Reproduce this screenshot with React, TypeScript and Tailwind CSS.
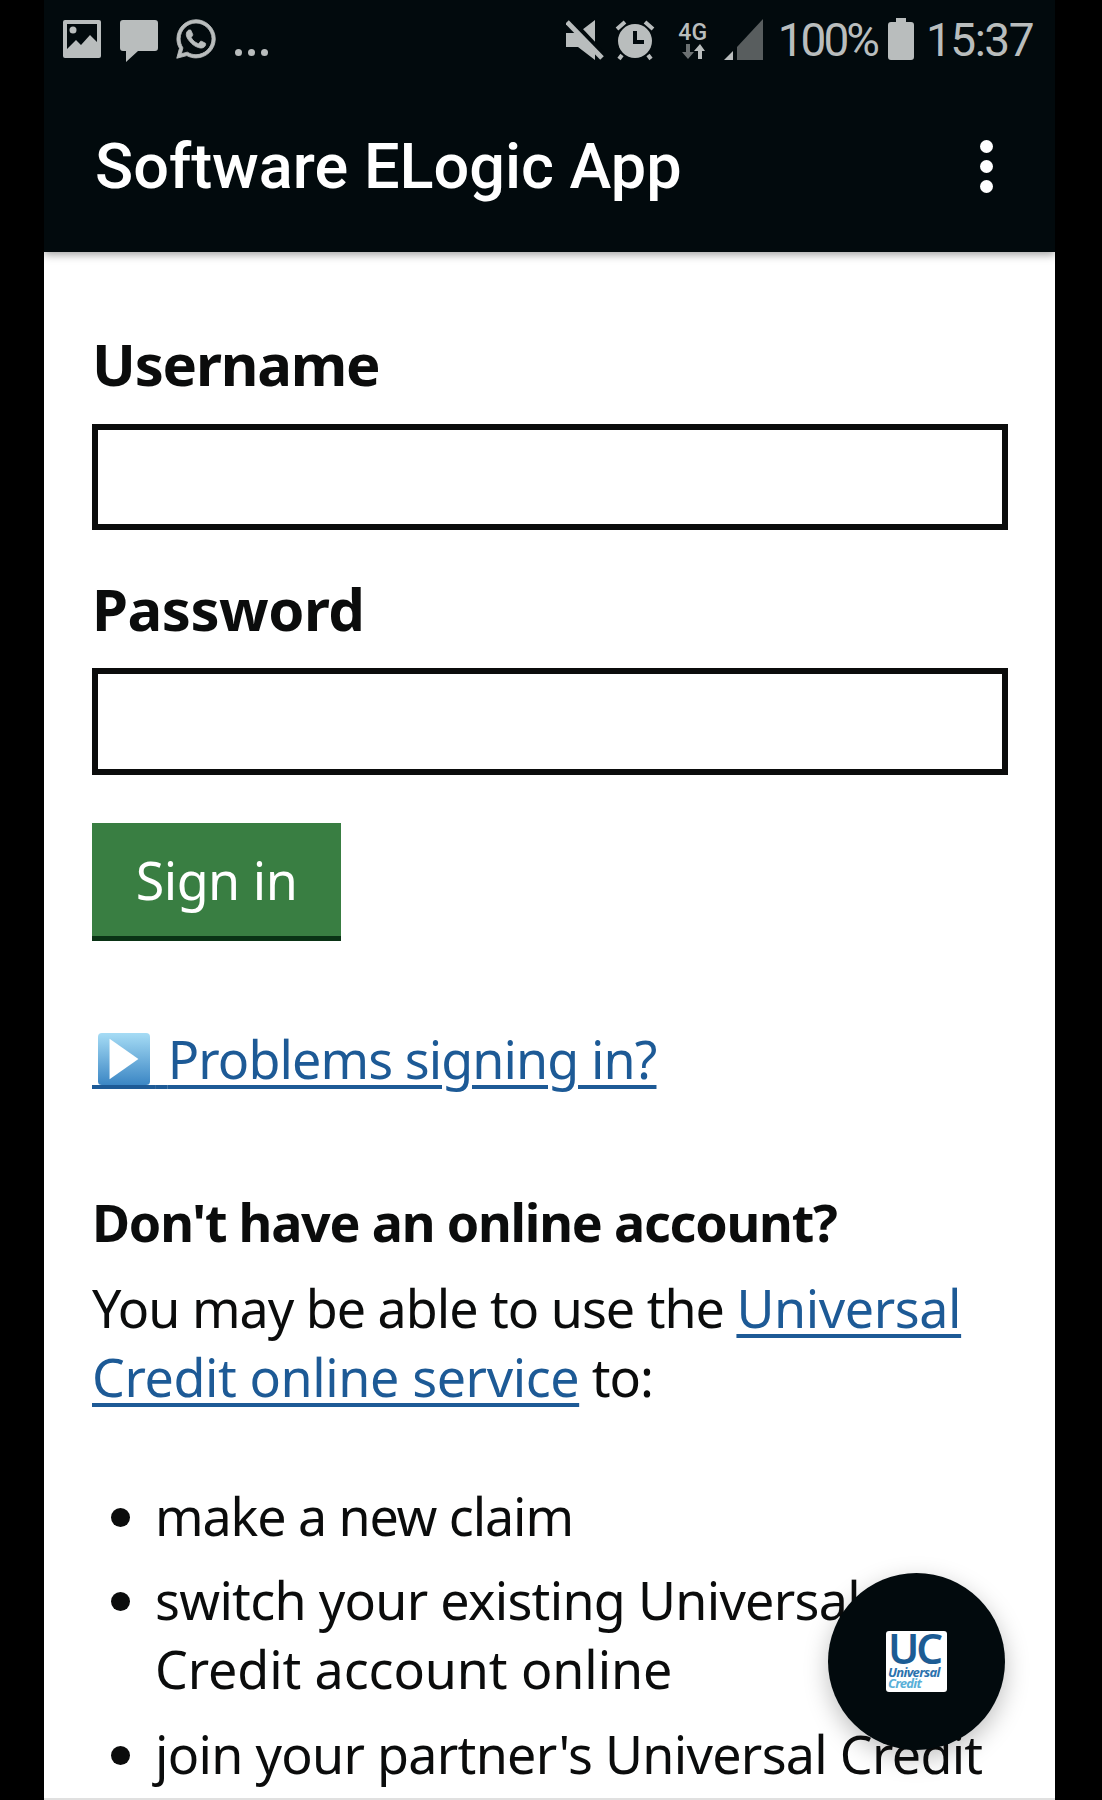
import { FaWhatsapp } from 'react-icons/fa';

function StatusIcons() {
  return (
    <div className="flex items-center h-[80px] pl-[19px] pr-[22px] text-[#b9bdbd]">
      <svg className="w-[38px] h-[38px] mt-[-2px]" viewBox="0 0 38 38">
        <path fill="#b9bdbd" d="M2 0h34a2 2 0 0 1 2 2v34a2 2 0 0 1-2 2H2a2 2 0 0 1-2-2V2a2 2 0 0 1 2-2z" />
        <path fill="#020a0d" d="M4 4h30v18l-7-7-9 10-5-5-9 9z" />
        <circle cx="10" cy="10" r="3.5" fill="#b9bdbd" />
      </svg>
      <svg className="w-[38px] h-[44px] ml-[19px] mt-[4px]" viewBox="0 0 38 44">
        <path fill="#b9bdbd" d="M3 0h32a3 3 0 0 1 3 3v25a3 3 0 0 1-3 3H18L6 42v-11H3a3 3 0 0 1-3-3V3a3 3 0 0 1 3-3z" />
      </svg>
      <FaWhatsapp className="w-[44px] h-[44px] ml-[16px] mt-[-3px] stroke-current stroke-[10]" />
      <div className="ml-[17px] mt-[25px] flex gap-[6px]">
        <span className="w-[7px] h-[7px] rounded-full bg-[#b9bdbd]" />
        <span className="w-[7px] h-[7px] rounded-full bg-[#b9bdbd]" />
        <span className="w-[7px] h-[7px] rounded-full bg-[#b9bdbd]" />
      </div>
      <div className="ml-auto flex items-center">
        <svg className="w-[38px] h-[40px]" viewBox="0 0 38 40">
          <path fill="#b9bdbd" d="M0 13h12L29 0v40L12 27H0z" />
          <path stroke="#020a0d" strokeWidth="5" d="M5 0l34 36" />
          <path stroke="#b9bdbd" strokeWidth="5" d="M1 2l35 36" />
        </svg>
        <svg className="w-[40px] h-[42px] ml-[11px]" viewBox="0 0 40 42">
          <circle cx="20" cy="22" r="17" fill="#b9bdbd" />
          <path stroke="#b9bdbd" strokeWidth="4" d="M2 10l8-7M38 10l-8-7M7 36l-3 4M33 36l3 4" />
          <path stroke="#020a0d" strokeWidth="4" fill="none" d="M20 12v11h9" />
        </svg>
        <div className="ml-[22px] w-[32px] flex flex-col items-center leading-none">
          <span className="text-[23px] font-medium h-[22px]">4G</span>
          <svg className="w-[24px] h-[15px] mt-[1px]" viewBox="0 0 24 15">
            <path fill="#6c7172" d="M5 0h4v8h4l-6 7-6-7h4z" />
            <path fill="#b9bdbd" d="M17 15h4V7h3l-5-7-6 7h4z" />
          </svg>
        </div>
        <svg className="w-[40px] h-[42px] ml-[15px] mt-[-1px]" viewBox="0 0 40 42">
          <path fill="#b9bdbd" d="M0 41l9-9v9z" />
          <path fill="#585d5e" d="M13 28L39 0v41H13z" />
        </svg>
        <span className="ml-[14px] text-[46px] tracking-[-3px] leading-none">100%</span>
        <svg className="w-[26px] h-[42px] ml-[11px] mt-[-2px]" viewBox="0 0 26 42">
          <path fill="#b9bdbd" d="M8 0h10v4h5a3 3 0 0 1 3 3v32a3 3 0 0 1-3 3H3a3 3 0 0 1-3-3V7a3 3 0 0 1 3-3h5z" />
        </svg>
        <span className="ml-[12px] text-[46px] tracking-[-1.5px] leading-none">15:37</span>
      </div>
    </div>
  );
}

function UcBadge() {
  return (
    <div className="absolute left-[828px] top-[1573px] w-[177px] h-[177px] rounded-full bg-[#020a0d] shadow-[0_8px_24px_rgba(0,0,0,0.25)] flex items-center justify-center">
      <div className="w-[61px] h-[61px] rounded-[3px] bg-white flex flex-col pl-[2px] font-['Noto_Sans',sans-serif]">
        <span className="text-[42px] leading-[34px] font-semibold tracking-[-3px] text-[#1c5c94]">UC</span>
        <span className="mt-[2px] text-[13px] leading-[11px] font-bold italic text-[#2b72ad] tracking-[-0.7px] whitespace-nowrap">Universal</span>
        <span className="text-[13px] leading-[11px] font-bold italic text-[#5ab0d8] tracking-[-0.7px]">Credit</span>
      </div>
    </div>
  );
}

export default function App() {
  return (
    <div className="relative w-[1102px] h-[1800px] overflow-hidden bg-black px-[44px] font-['Roboto',sans-serif]">
      <div className="w-[1011px] h-full bg-white flex flex-col border-b-2 border-[#e0e0e0]">
        <header className="h-[252px] shrink-0 bg-[#020a0d] shadow-[0_3px_8px_rgba(0,0,0,0.35)] relative">
          <StatusIcons />
          <div className="flex items-center justify-between h-[172px] pl-[51px] pr-[62px]">
            <h1 className="text-[63px] font-medium text-white leading-none">Software ELogic App</h1>
            <div className="flex flex-col gap-[7px]">
              <span className="w-[13px] h-[13px] rounded-full bg-white" />
              <span className="w-[13px] h-[13px] rounded-full bg-white" />
              <span className="w-[13px] h-[13px] rounded-full bg-white" />
            </div>
          </div>
        </header>

        <main className="pl-[48px] pr-[47px] font-['Noto_Sans',sans-serif] text-[#0b0c0c]">
          <label className="block mt-[80px] text-[58px] leading-[64px] font-bold tracking-[-1.2px]">Username</label>
          <div className="mt-[28px] h-[106px] border-[6px] border-[#0b0c0c]" />
          <label className="block mt-[47px] text-[58px] leading-[64px] font-bold tracking-[-0.5px]">Password</label>
          <div className="mt-[27px] h-[107px] border-[6px] border-[#0b0c0c]" />
          <button className="block mt-[48px] w-[249px] h-[118px] bg-[#397e42] border-b-[5px] border-[#0a3315] text-white text-[52px] tracking-[-0.5px] leading-none">
            Sign in
          </button>

          <a className="block mt-[86px] text-[52px] leading-[64px] tracking-[-0.9px] text-[#1d5a96] underline underline-offset-[6px] decoration-[4px]">
            <span className="relative">
              {'\u00a0\u00a0\u00a0\u00a0\u00a0'}
              <svg className="absolute left-[6px] top-[10px] w-[52px] h-[52px]" viewBox="0 0 54 54">
                <defs>
                  <linearGradient id="play" x1="0" y1="0" x2="0" y2="1">
                    <stop offset="0" stopColor="#a6dcf5" />
                    <stop offset="1" stopColor="#3b86c4" />
                  </linearGradient>
                </defs>
                <rect width="54" height="54" rx="4" fill="url(#play)" />
                <path fill="#fff" d="M12 6l30 21-30 21z" />
              </svg>
            </span>{' '}
            Problems signing in?
          </a>

          <h2 className="mt-[99px] text-[52px] leading-[64px] font-bold tracking-[-1.2px]">Don't have an online account?</h2>
          <p className="mt-[19px] text-[52px] leading-[69px] tracking-[-1px]">
            You may be able to use the{' '}
            <a className="tracking-[-0.4px] text-[#1d5a96] underline underline-offset-[6px] decoration-[4px]">Universal Credit online service</a>{' '}
            to:
          </p>
          <ul className="mt-[70px] pl-[63px] list-disc text-[52px] leading-[69px] tracking-[-0.7px]">
            <li className="mb-[15px] tracking-[-1.1px]">make a new claim</li>
            <li className="mb-[16px]">
              switch your existing Universal
              <br />
              <span className="tracking-[-0.1px]">Credit account online</span>
            </li>
            <li>join your partner's Universal Credit</li>
          </ul>
        </main>
      </div>
      <UcBadge />
    </div>
  );
}
